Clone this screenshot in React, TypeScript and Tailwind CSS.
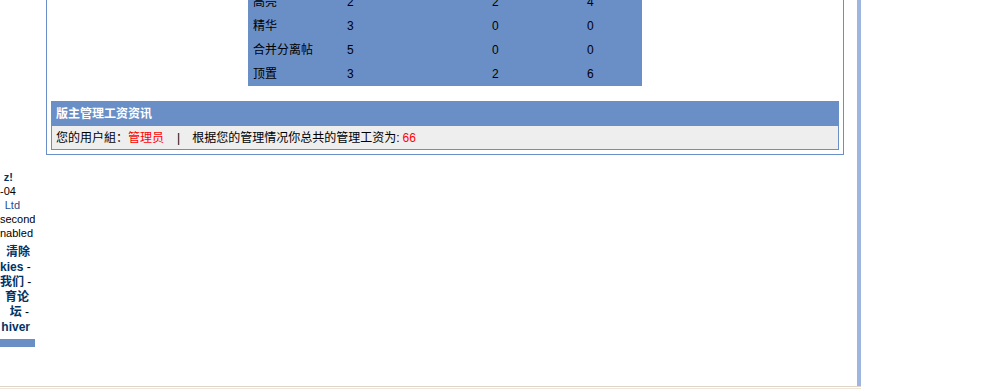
export default function App() {
  const rows = [
    ["高亮", "2", "2", "4"],
    ["精华", "3", "0", "0"],
    ["合并分离帖", "5", "0", "0"],
    ["顶置", "3", "2", "6"],
  ];
  return (
    <div className="w-[989px] h-[389px] overflow-hidden bg-white text-[12px] leading-none text-black font-[family-name:'Liberation_Sans','Noto_Sans_CJK_SC',sans-serif]">
      <div className="flex h-[386px] w-[861px]">
        <aside className="w-[35px] shrink-0 overflow-hidden pt-[170px]">
          <div className="text-[11px] leading-[14px] text-right">
            <div className="pr-[22px] whitespace-nowrap font-bold text-[#003366]">z!</div>
            <div className="pr-[21px] whitespace-nowrap">-04</div>
            <div className="pr-[15px] whitespace-nowrap text-[#1f4e8c]">Ltd</div>
            <div className="pr-[2px] whitespace-nowrap">second</div>
            <div className="pr-[6px] whitespace-nowrap">nabled</div>
          </div>
          <div className="mt-[5px] text-[12px] leading-[15px] font-bold text-[#003366] text-right">
            <div className="pr-[5px] whitespace-nowrap">清除</div>
            <div className="pr-[6px] whitespace-nowrap">
              kies<span className="font-normal text-black"> -</span>
            </div>
            <div className="pr-[6px] whitespace-nowrap">
              我们<span className="font-normal text-black"> -</span>
            </div>
            <div className="pr-[6px] whitespace-nowrap">育论</div>
            <div className="pr-[6px] whitespace-nowrap">
              坛<span className="font-normal text-black"> -</span>
            </div>
            <div className="pr-[5px] whitespace-nowrap">hiver</div>
          </div>
          <div className="mt-[4px] h-[8px] w-[35px] bg-[#6a8fc7]" />
        </aside>
        <main className="w-[822px] shrink-0 overflow-hidden">
          <div className="ml-[11px] w-[798px] border-x border-b border-[#6a8fc7] px-[4px] pb-[4px]">
            <div className="-mt-[10px] mx-auto w-[394px] bg-[#6a8fc7]">
              {rows.map((r) => (
                <div key={r[0]} className="grid h-[24px] grid-cols-[94px_145px_95px_60px] items-center">
                  {r.map((c, i) => (
                    <div key={i} className="pl-[5px] whitespace-nowrap">
                      {c}
                    </div>
                  ))}
                </div>
              ))}
            </div>
            <div className="mt-[15px] border border-[#6a8fc7]">
              <div className="flex h-[24px] items-center bg-[#6a8fc7] pl-[4px] font-bold text-white">
                版主管理工资资讯
              </div>
              <div className="flex h-[23px] items-center bg-[#eeeeee] pl-[4px] whitespace-nowrap">
                <span>您的用户組：</span>
                <span className="text-[#ff0000]">管理员</span>
                <span className="ml-[13px]">|</span>
                <span className="ml-[12px]">根据您的管理情况你总共的管理工资为:</span>
                <span className="ml-[3px] text-[#ff0000]">66</span>
              </div>
            </div>
          </div>
        </main>
        <div className="h-[386px] w-[4px] shrink-0 bg-[#9db6df]" />
      </div>
      <div className="h-[1px] w-[861px] bg-[#ddd4ca]" />
      <div className="h-[1px] w-[861px] bg-white" />
      <div className="h-[1px] w-[861px] bg-[#efe5d9]" />
    </div>
  );
}
